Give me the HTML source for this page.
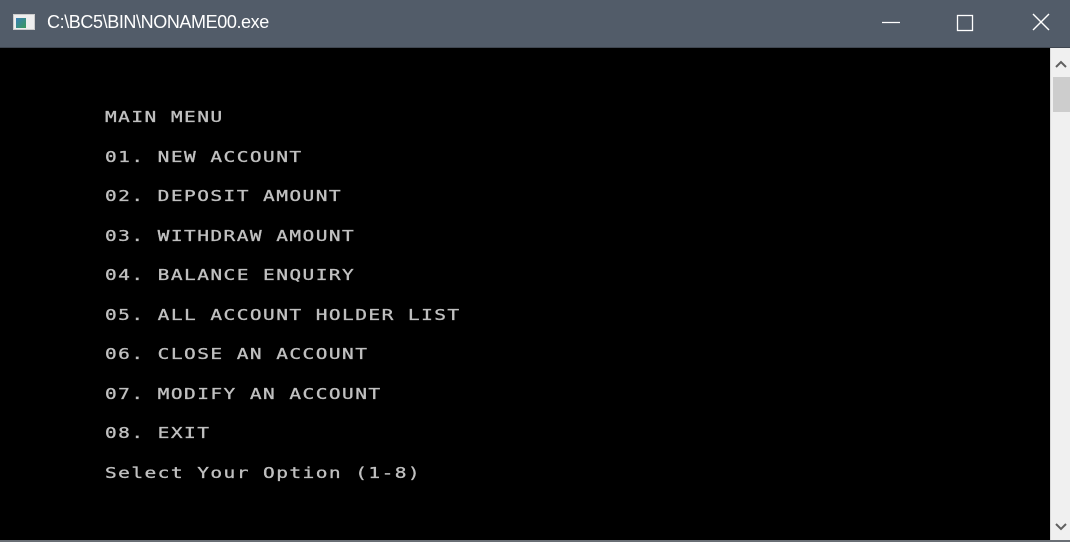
<!DOCTYPE html>
<html><head><style>
html,body{margin:0;padding:0;width:1070px;height:542px;overflow:hidden;background:#000;position:relative}
.tb{position:absolute;left:0;top:0;width:1070px;height:47px;background:#525c69;border-bottom:1px solid #3f4650}
.title{position:absolute;left:47px;top:12px;font:18px "Liberation Sans",sans-serif;color:#fff;letter-spacing:-0.4px}
.ico{position:absolute;left:13px;top:14px;width:22px;height:16px;background:#eee;border:1px solid #ccc;box-sizing:border-box}
.ico i{position:absolute;left:2px;top:3px;width:10px;height:10px;background:linear-gradient(135deg,#3b7fb8,#3a9a5a)}
.con{position:absolute;left:105px;top:0;font:15px "DejaVu Sans Mono",monospace;color:#c0c0c0;letter-spacing:1.1px;white-space:pre;transform:scaleX(1.3);transform-origin:0 0;-webkit-text-stroke:0.3px #c0c0c0}
.con div{position:absolute;left:0;line-height:20px}
.sb{position:absolute;left:1050px;top:48px;width:20px;height:494px;background:#f0f0f0;border-left:1px solid #d9d9d9}
.th{position:absolute;left:2px;top:29px;width:18px;height:35px;background:#cdcdcd}
.bl{position:absolute;left:0;top:540px;width:1070px;height:2px;background:#6a6f75}
</style></head><body>
<div class="tb">
<div class="ico"><i></i></div>
<div class="title">C:\BC5\BIN\NONAME00.exe</div>
<svg style="position:absolute;left:870px;top:10px" width="200" height="27">
<line x1="12" y1="12.5" x2="30" y2="12.5" stroke="#fff" stroke-width="1.2"/>
<rect x="87.5" y="5.5" width="15" height="15" fill="none" stroke="#fff" stroke-width="1.3"/>
<line x1="163" y1="4" x2="179" y2="20" stroke="#fff" stroke-width="1.4"/>
<line x1="179" y1="4" x2="163" y2="20" stroke="#fff" stroke-width="1.4"/>
</svg>
</div>
<div class="con">
<div style="top:107px">MAIN MENU</div>
<div style="top:147px">01. NEW ACCOUNT</div>
<div style="top:186px">02. DEPOSIT AMOUNT</div>
<div style="top:226px">03. WITHDRAW AMOUNT</div>
<div style="top:265px">04. BALANCE ENQUIRY</div>
<div style="top:305px">05. ALL ACCOUNT HOLDER LIST</div>
<div style="top:344px">06. CLOSE AN ACCOUNT</div>
<div style="top:384px">07. MODIFY AN ACCOUNT</div>
<div style="top:423px">08. EXIT</div>
<div style="top:463px">Select Your Option (1-8)</div>
</div>
<div class="sb"><div class="th"></div>
<svg style="position:absolute;left:0;top:0" width="20" height="494">
<polyline points="5,19 10,14 15,19" fill="none" stroke="#606060" stroke-width="2"/>
<polyline points="5,476 10,481 15,476" fill="none" stroke="#606060" stroke-width="2"/>
</svg></div>
<div class="bl"></div>
</body></html>
